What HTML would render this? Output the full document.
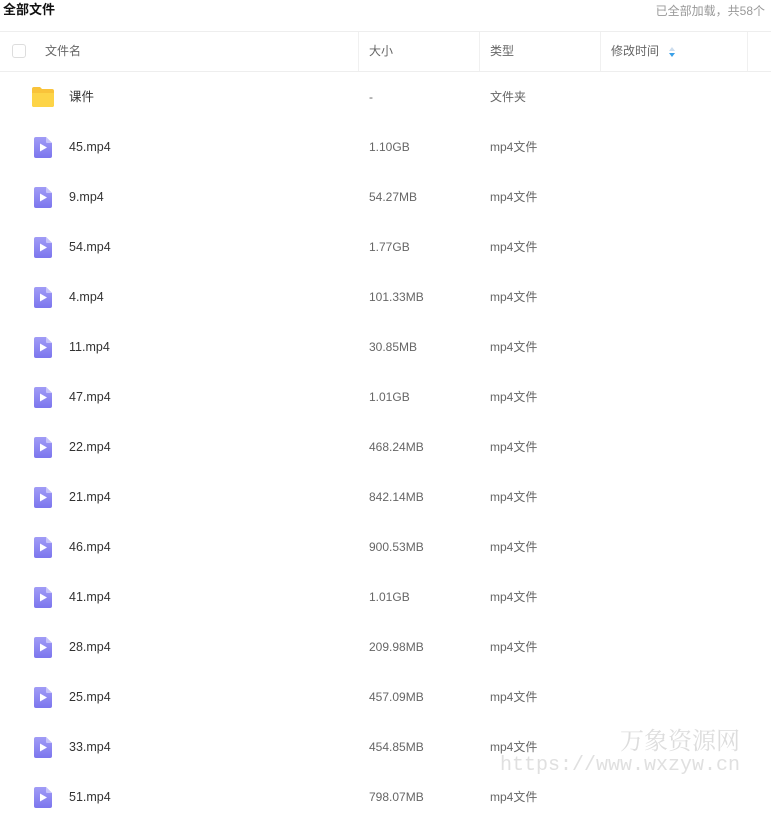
<!DOCTYPE html>
<html><head><meta charset="utf-8"><style>
*{margin:0;padding:0;box-sizing:border-box}
body{width:771px;height:799px;overflow:hidden;background:#fff;font-family:"Liberation Sans","Noto Sans CJK SC",sans-serif;position:relative;color:#333}
.t{position:absolute;left:3px;top:0;line-height:20px;font-size:13px;font-weight:bold;color:#111}
.r{position:absolute;right:6px;top:0;line-height:22px;font-size:12px;color:#999}
.hd{position:absolute;left:0;top:31px;width:771px;height:41px;border-top:1px solid #eee;border-bottom:1px solid #eee;font-size:12px;color:#666}
.hd span{position:absolute;top:0;line-height:39px}
.dv{position:absolute;top:0;width:1px;height:39px;background:#f0f0f0}
.cb{position:absolute;left:12px;top:12px;width:14px;height:14px;border:1px solid #ddd;border-radius:3px}
.row{position:absolute;left:0;width:771px;height:50px;font-size:12px;line-height:50px}
.row span{position:absolute;top:0}
.row .n{left:69px;color:#333;font-size:12.5px}
.row .s{left:369px;color:#666}
.row .k{left:490px;color:#666}
.ic{position:absolute;left:34px;top:15px}
.wm1{position:absolute;left:620px;top:724px;font-size:24px;line-height:30px;color:#ddd;font-family:"Noto Serif CJK SC",serif;letter-spacing:0}
.wm2{position:absolute;left:500px;top:753px;font-size:20px;line-height:26px;color:#e0e0e0;font-family:"Liberation Mono",monospace}
</style></head><body>
<div class="t">全部文件</div>
<div class="r">已全部加载，共58个</div>
<div class="hd">
<div class="cb"></div>
<span style="left:45px">文件名</span>
<div class="dv" style="left:358px"></div>
<span style="left:369px">大小</span>
<div class="dv" style="left:479px"></div>
<span style="left:490px">类型</span>
<div class="dv" style="left:600px"></div>
<span style="left:611px">修改时间</span>
<svg style="position:absolute;left:669px;top:15px" width="6" height="10"><path d="M3 0L6 4H0Z" fill="#cde"/><path d="M3 10L6 6H0Z" fill="#3aa0e8"/></svg>
<div class="dv" style="left:747px"></div>
</div>
<div class="row" style="top:72px">
<svg style="position:absolute;left:31px;top:14px" width="24" height="22"><path d="M1 3Q1 1 3 1H9L11 3H21Q23 3 23 5V19Q23 21 21 21H3Q1 21 1 19Z" fill="#f9c33a"/><path d="M1 7H23V19Q23 21 21 21H3Q1 21 1 19Z" fill="#fdd447"/></svg>
<span class="n">课件</span><span class="s">-</span><span class="k">文件夹</span></div>
<div id="rows"></div>
<script>
var d=[["45","1.10GB"],["9","54.27MB"],["54","1.77GB"],["4","101.33MB"],["11","30.85MB"],["47","1.01GB"],["22","468.24MB"],["21","842.14MB"],["46","900.53MB"],["41","1.01GB"],["28","209.98MB"],["25","457.09MB"],["33","454.85MB"],["51","798.07MB"]];
var h="";d.forEach(function(x,i){h+='<div class="row" style="top:'+(122+i*50)+'px"><svg class="ic" width="18" height="21"><defs><linearGradient id="g'+i+'" x1="0" y1="0" x2="0" y2="1"><stop offset="0" stop-color="#a19cf6"/><stop offset="1" stop-color="#7c76ee"/></linearGradient></defs><path d="M2 0H12L18 6V19Q18 21 16 21H2Q0 21 0 19V2Q0 0 2 0Z" fill="url(#g'+i+')"/><path d="M12 0V5Q12 6 13 6H18Z" fill="#c7c4fb"/><path d="M6 6.5L13 10.5L6 14.5Z" fill="#fff"/></svg><span class="n">'+x[0]+'.mp4</span><span class="s">'+x[1]+'</span><span class="k">mp4文件</span></div>'});
document.getElementById("rows").innerHTML=h;
</script>
<div class="wm1">万象资源网</div>
<div class="wm2">https://www.wxzyw.cn</div>
</body></html>
